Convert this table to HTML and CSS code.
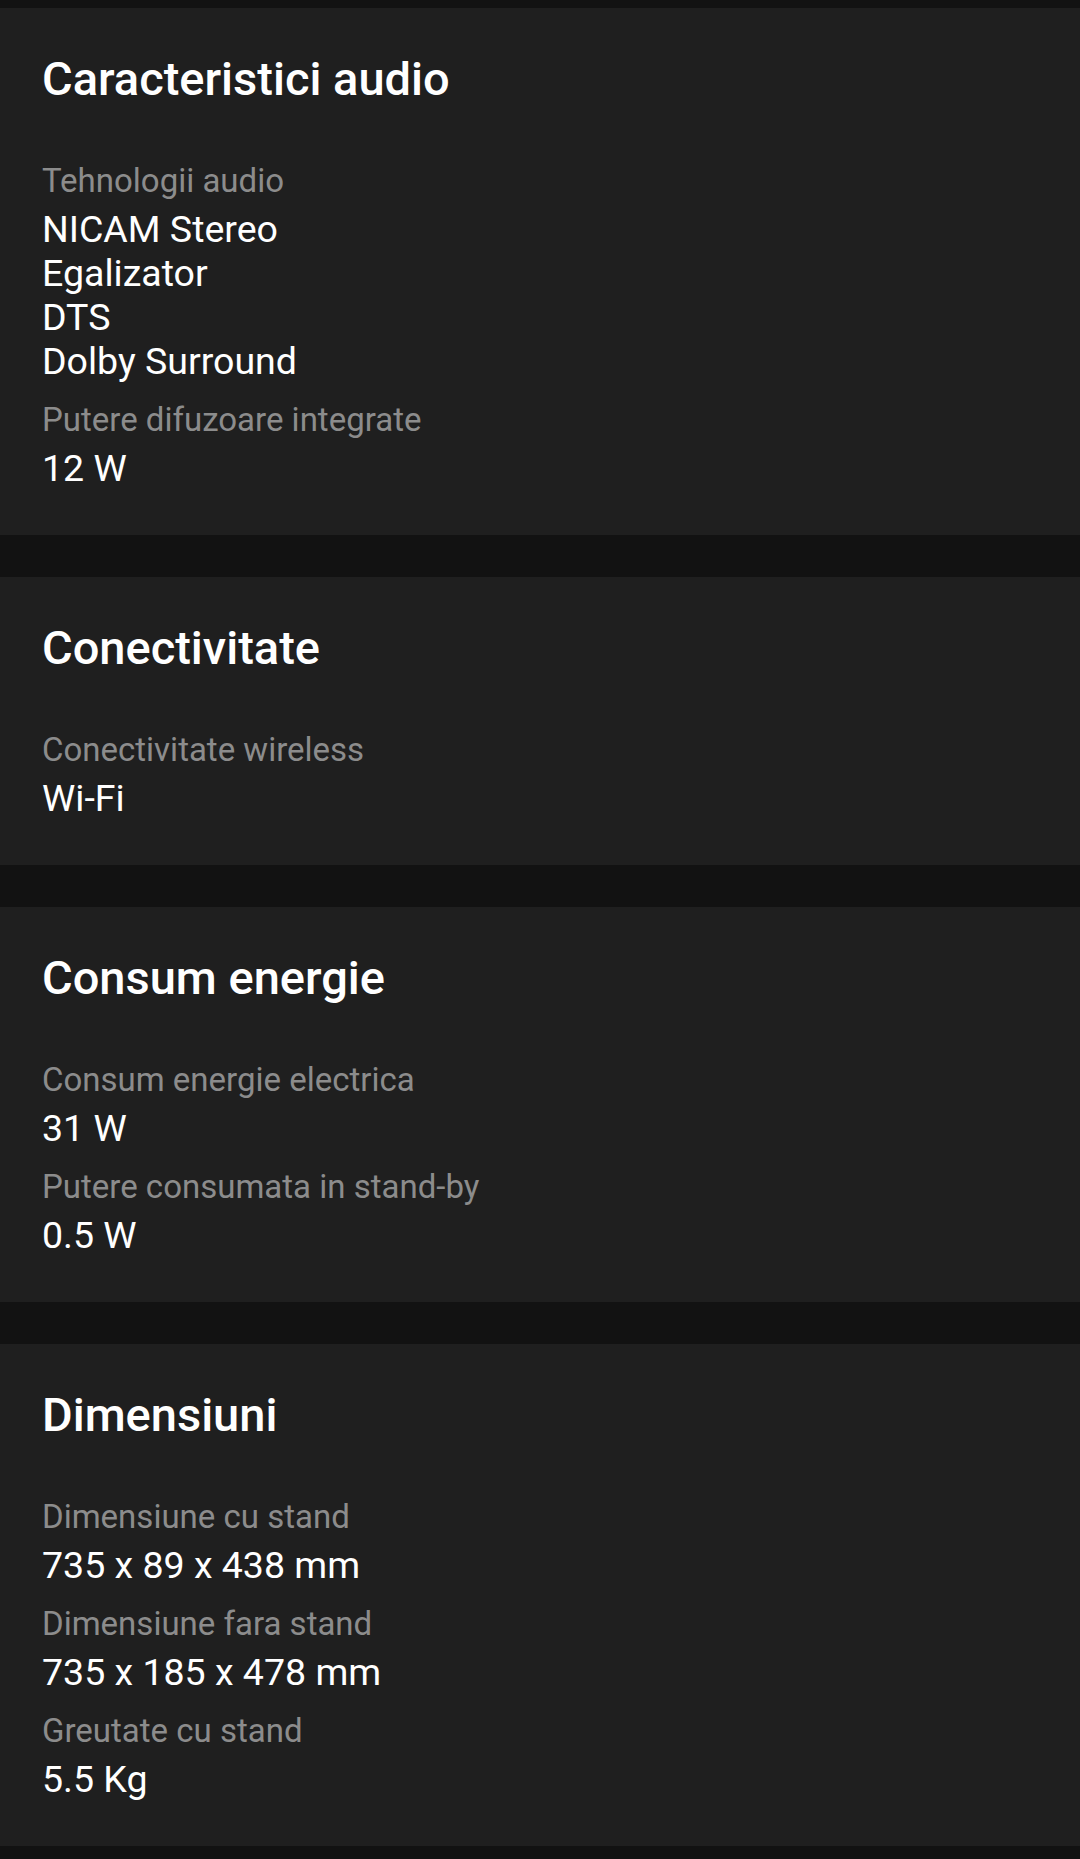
FILE: index.html
```html
<!DOCTYPE html>
<html lang="ro">
<head>
<meta charset="utf-8">
<title>Specificatii</title>
<link rel="stylesheet" href="styles.css">
</head>
<body>
<main class="page">
  <section class="card">
    <h2 class="card-title">Caracteristici audio</h2>
    <dl class="specs">
      <div class="spec">
        <dt class="spec-label">Tehnologii audio</dt>
        <dd class="spec-value">NICAM Stereo<br>Egalizator<br>DTS<br>Dolby Surround</dd>
      </div>
      <div class="spec">
        <dt class="spec-label">Putere difuzoare integrate</dt>
        <dd class="spec-value">12 W</dd>
      </div>
    </dl>
  </section>
  <section class="card">
    <h2 class="card-title">Conectivitate</h2>
    <dl class="specs">
      <div class="spec">
        <dt class="spec-label">Conectivitate wireless</dt>
        <dd class="spec-value">Wi-Fi</dd>
      </div>
    </dl>
  </section>
  <section class="card">
    <h2 class="card-title">Consum energie</h2>
    <dl class="specs">
      <div class="spec">
        <dt class="spec-label">Consum energie electrica</dt>
        <dd class="spec-value">31 W</dd>
      </div>
      <div class="spec">
        <dt class="spec-label">Putere consumata in stand-by</dt>
        <dd class="spec-value">0.5 W</dd>
      </div>
    </dl>
  </section>
  <section class="card">
    <h2 class="card-title">Dimensiuni</h2>
    <dl class="specs">
      <div class="spec">
        <dt class="spec-label">Dimensiune cu stand</dt>
        <dd class="spec-value">735 x 89 x 438 mm</dd>
      </div>
      <div class="spec">
        <dt class="spec-label">Dimensiune fara stand</dt>
        <dd class="spec-value">735 x 185 x 478 mm</dd>
      </div>
      <div class="spec">
        <dt class="spec-label">Greutate cu stand</dt>
        <dd class="spec-value">5.5 Kg</dd>
      </div>
    </dl>
  </section>
</main>
</body>
</html>
```
FILE: styles.css
```css
html, body {
  margin: 0;
  padding: 0;
  background: #121212;
}
body {
  font-family: Roboto, "Noto Sans", "Liberation Sans", sans-serif;
  color: #ffffff;
  min-height: 1859px;
}
.page {
  display: flex;
  flex-direction: column;
  gap: 42px;
  padding-top: 8px;
}
.card {
  background: #1f1f1f;
  padding: 43px 42px 45px;
}
.card-title {
  margin: 0 0 55px;
  font-size: 47px;
  line-height: 55px;
  font-weight: 500;
  color: #ffffff;
}
.specs {
  margin: 0;
  display: flex;
  flex-direction: column;
  gap: 17px;
}
.spec-label {
  margin: 0 0 6px;
  font-size: 33px;
  line-height: 40px;
  color: #8c8c8c;
}
.spec-value {
  margin: 0;
  font-size: 37.5px;
  line-height: 44px;
  color: #ffffff;
}
```
